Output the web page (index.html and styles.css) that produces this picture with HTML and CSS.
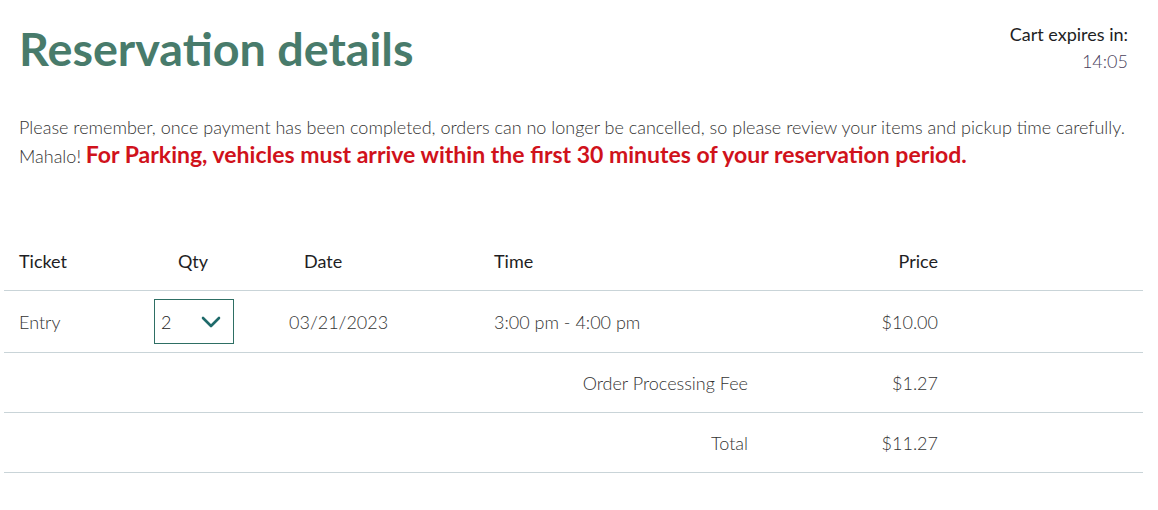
FILE: index.html
```html
<!DOCTYPE html>
<html lang="en">
<head>
<meta charset="utf-8">
<title>Reservation details</title>
<link rel="stylesheet" href="styles.css">
</head>
<body>
<div class="page">
  <header class="top">
    <h1 class="title">Reservation details</h1>
    <div class="timer">
      <div class="timer-label">Cart expires in:</div>
      <div class="timer-value">14:05</div>
    </div>
  </header>
  <p class="notice">Please remember, once payment has been completed, orders can no longer be cancelled, so please review your items and pickup time carefully. Mahalo! <strong class="warn">For Parking, vehicles must arrive within the first 30 minutes of your reservation period.</strong></p>

  <div class="table">
    <div class="row head">
      <div class="cell c-ticket">Ticket</div>
      <div class="cell c-qty">Qty</div>
      <div class="cell c-date head-date">Date</div>
      <div class="cell c-time">Time</div>
      <div class="cell c-price">Price</div>
      <div class="cell"></div>
    </div>
    <div class="row item">
      <div class="cell c-ticket">Entry</div>
      <div class="cell c-qty">
        <div class="select">
          <span class="select-val">2</span>
          <svg class="chev" width="20" height="12" viewBox="0 0 20 12"><path d="M2 2 L10 10 L18 2" fill="none" stroke="#1f6a6a" stroke-width="2.6" stroke-linecap="round" stroke-linejoin="round"/></svg>
        </div>
      </div>
      <div class="cell c-date">03/21/2023</div>
      <div class="cell c-time">3:00 pm - 4:00 pm</div>
      <div class="cell c-price">$10.00</div>
      <div class="cell"></div>
    </div>
    <div class="row sum">
      <div class="cell c-label">Order Processing Fee</div>
      <div class="cell c-price">$1.27</div>
      <div class="cell"></div>
    </div>
    <div class="row sum">
      <div class="cell c-label">Total</div>
      <div class="cell c-price">$11.27</div>
      <div class="cell"></div>
    </div>
  </div>
</div>
</body>
</html>
```
FILE: styles.css
```css
* { box-sizing: border-box; }
html, body { margin: 0; padding: 0; background: #fff; }
body {
  font-family: Lato, "Open Sans", "Liberation Sans", sans-serif;
  color: #2b2b2b;
}
.page {
  padding: 0 15px 0 4px;
}
.top {
  display: flex;
  justify-content: space-between;
  align-items: flex-start;
  padding: 0 15px;
}
.title {
  margin: 20px 0 0 0;
  font-size: 46.7px;
  font-weight: 700;
  line-height: 56px;
  color: #487b6b;
}
.timer {
  text-align: right;
  padding-top: 21px;
  font-size: 18px;
  line-height: 27px;
}
.timer-label { color: #1e1e24; font-weight: 400; }
.timer-value { color: #4a3f5c; font-weight: 300; }
.notice {
  margin: 38px 0 0 0;
  padding: 0 15px;
  font-size: 18px;
  line-height: 27px;
  font-weight: 300;
  color: #333;
}
.warn {
  font-size: 23px;
  line-height: 27px;
  font-weight: 700;
  color: #d0121b;
}
.table {
  margin-top: 62px;
}
.row {
  display: grid;
  grid-template-columns: 120px 140px 210px 289px 190px 1fr;
  align-items: center;
  border-bottom: 1px solid #c9d4d8;
  font-size: 18px;
}
.row.head { height: 59px; color: #1e1e24; font-weight: 400; }
.row.item { height: 62px; font-weight: 300; color: #333; }
.row.sum { height: 60px; font-weight: 300; color: #333; grid-template-columns: 759px 190px 1fr; }
.cell { padding: 0 15px; }
.c-qty { display: flex; justify-content: center; padding: 0; }
.head .c-qty { padding-right: 2px; }
.c-date { padding-left: 25px; }
.head-date { padding-left: 40px; }
.c-time { padding-left: 20px; }
.c-price { text-align: right; }
.c-label { text-align: right; }
.select {
  width: 80px;
  height: 45px;
  border: 1px solid #2e6f64;
  display: flex;
  align-items: center;
  justify-content: space-between;
  padding: 0 12px 0 6px;
  color: #222;
  font-weight: 300;
}
.select-val { font-size: 18px; }
.chev { display: block; }
```
